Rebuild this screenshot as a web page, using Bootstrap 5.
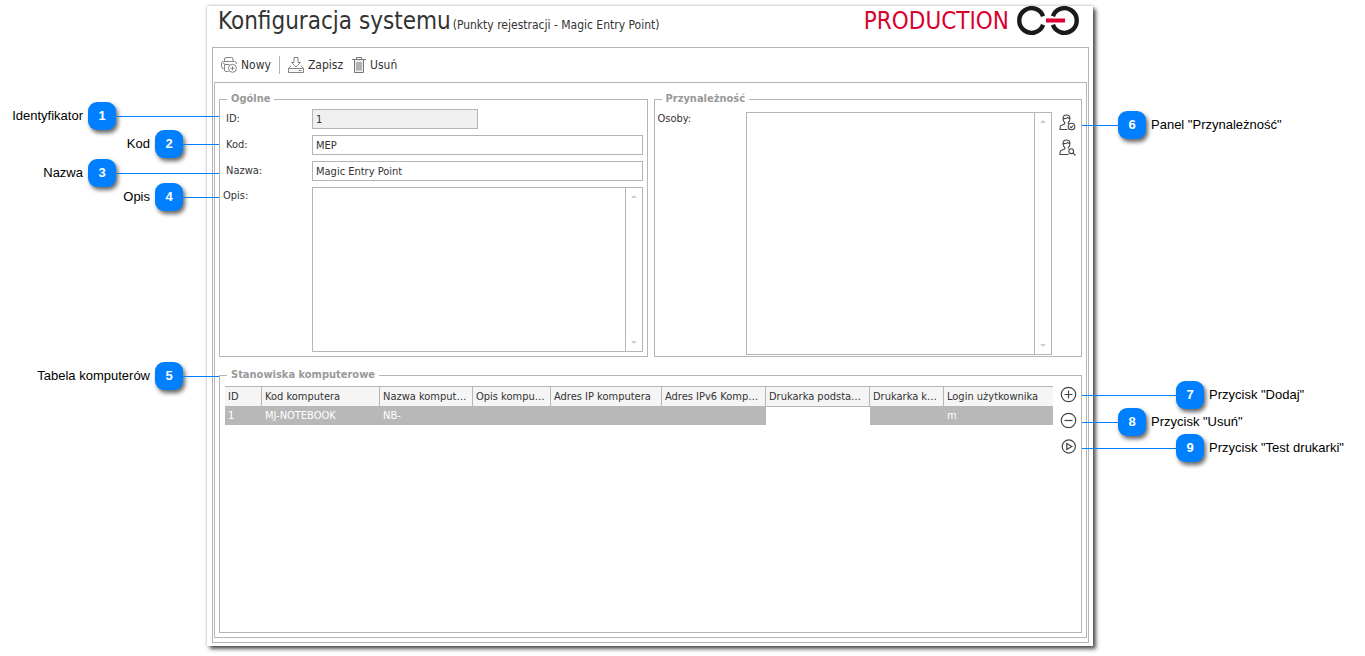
<!DOCTYPE html>
<html lang="pl">
<head>
<meta charset="utf-8">
<meta name="viewport" content="width=device-width, initial-scale=1">
<title>Konfiguracja systemu</title>
<link href="https://cdn.jsdelivr.net/npm/bootstrap@5.3.0/dist/css/bootstrap.min.css" rel="stylesheet">
<style>
:root { --line: #b5b5b5; --blue: #007fff; --ink: #333; }
body { font-family: "DejaVu Sans Condensed", "DejaVu Sans", sans-serif; font-size: 11px; line-height: 14px; color: var(--ink); background: #fff; }
.side-left { flex: 0 0 207px; }
.side-right { flex: 0 0 272px; }
.window { margin: 6px 0 10px; padding: 0 4px 3px 5px; background: #fff; min-width: 0;
  box-shadow: 3px 3px 4px rgba(0,0,0,.65), 0 0 3px rgba(0,0,0,.3); }
.title-bar { height: 41px; padding: 0 10px 0 6px; }
.title-bar h1 { font-size: 24px; line-height: 31px; color: var(--ink); gap: 2px; }
.title-bar small { font-size: 12px; }
.brand-name { font-size: 24px; line-height: 31px; color: #d9002f; }
.frame { border: 1px solid var(--line); }
.frame-outer { padding: 0 1px 4px; }
.frame-inner { padding: 9px 4px 4px; }
.toolbar { height: 34px; padding: 0 7px; }
.tool { padding: 0; border: 0; background: none; color: var(--ink); font-size: 12px; line-height: 16px; gap: 3px; }
.split { width: 1px; height: 18px; background: var(--line); margin: 0 8px; }
.panels { gap: 6px; margin-bottom: 11px; }
fieldset.group { border: 1px solid var(--line); }
fieldset.group legend { float: none; width: auto; margin: 0 0 0 7px; padding: 0 4px; font-size: 11px; line-height: 14px; font-weight: 700; color: #999; }
.fields { padding: 3px 4px 4px 0; gap: 6px; }
.fields label { flex: 0 0 92px; padding-left: 6px; line-height: 20px; }
.fields label.tall { padding-left: 3px; line-height: 18px; }
.people { padding: 6px 5px 1px 3px; }
.people label { flex: 0 0 88px; }
.field { height: 20px; min-height: 0; padding: 0 3px; border: 1px solid var(--line); border-radius: 0; font-size: 11px; line-height: 18px; color: var(--ink); }
.field-id { width: 166px; }
.field[readonly] { background: #f0f0f0; }
.memo { border: 1px solid var(--line); min-width: 0; }
.memo textarea { resize: none; border: 0; border-radius: 0; padding: 3px; font-size: 11px; outline: 0; min-width: 0; overflow: hidden; }
.memo-text { height: 165px; }
.gutter { flex: 0 0 17px; border-left: 1px solid var(--line); padding: 7px 0; }
.gutter span { border: 3px solid transparent; }
.gutter .up { border-top: 0; border-bottom-color: #ccc; }
.gutter .down { border-bottom: 0; border-top-color: #ccc; }
.icon-btn { padding: 0; border: 0; background: none; width: 17px; height: 17px; line-height: 0; }
.people-tools { flex: 0 0 17px; margin-left: 7px; padding-top: 2px; gap: 8px; }
.stations { padding: 4px 4px 0 5px; }
.station-tools { flex: 0 0 17px; margin-left: 7px; gap: 9px; }
.grid { table-layout: fixed; border-collapse: separate; border-spacing: 0; margin: 0; font-size: 11px; line-height: 14px; color: var(--ink); border-top: 1px solid var(--line); }
.grid th, .grid td { padding: 3px 3px 2px; white-space: nowrap; overflow: hidden; height: 19px; border: 0; }
.grid th { font-weight: 400; background: #f5f5f5; box-shadow: none; border-right: 1px solid var(--line); color: var(--ink); }
.grid th:last-child { border-right: 0; }
.grid td { background: #b8b8b8; color: #fff; box-shadow: none; }
.grid td.blank { background: #fff; box-shadow: inset 0 1px var(--line); }
.callout { position: absolute; z-index: 2; height: 28px; font-family: "Liberation Sans", Arial, sans-serif; font-size: 13px; line-height: 16px; color: #000; white-space: nowrap; }
.side-left .callout { left: 0; width: 219px; }
.side-right .callout { right: 0; left: -11px; }
.pin { flex: 0 0 28px; height: 28px; border-radius: 9px; background: var(--blue); color: #fff; font-weight: 700; line-height: 28px; text-align: center; box-shadow: 2px 3px 4px rgba(0,0,0,.6); }
.lead-line { height: 1px; background: var(--blue); }
.side-left .name { flex: 0 0 88px; padding-right: 5px; text-align: right; }
.side-left .near .name { flex-basis: 155px; }
.side-right .name { padding-left: 5px; }
.side-right .lead-line { flex: 0 0 94px; }
.side-right .near .lead-line { flex-basis: 36px; }
.c1 { top: 102px; } .c2 { top: 130px; } .c3 { top: 159px; } .c4 { top: 183px; } .c5 { top: 362px; }
.c6 { top: 111px; } .c7 { top: 381px; } .c8 { top: 408px; } .c9 { top: 434px; }
svg { display: block; }
</style>
</head>
<body>
<div class="d-flex min-vh-100">
  <aside class="side-left position-relative" aria-label="Opisy pól">
    <div class="callout c1 d-flex align-items-center"><span class="name">Identyfikator</span><span class="pin">1</span><span class="lead-line flex-grow-1"></span></div>
    <div class="callout c2 near d-flex align-items-center"><span class="name">Kod</span><span class="pin">2</span><span class="lead-line flex-grow-1"></span></div>
    <div class="callout c3 d-flex align-items-center"><span class="name">Nazwa</span><span class="pin">3</span><span class="lead-line flex-grow-1"></span></div>
    <div class="callout c4 near d-flex align-items-center"><span class="name">Opis</span><span class="pin">4</span><span class="lead-line flex-grow-1"></span></div>
    <div class="callout c5 near d-flex align-items-center"><span class="name">Tabela komputerów</span><span class="pin">5</span><span class="lead-line flex-grow-1"></span></div>
  </aside>

  <main class="window flex-grow-1 d-flex flex-column">
    <header class="title-bar d-flex justify-content-between align-items-start">
      <h1 class="m-0 fw-normal text-nowrap d-flex align-items-baseline"><span>Konfiguracja systemu</span> <small class="fw-normal">(Punkty rejestracji - Magic Entry Point)</small></h1>
      <div class="d-flex gap-2">
        <span class="brand-name">PRODUCTION</span>
        <svg width="62" height="29" viewBox="0 0 62 29" fill="none" stroke="#1a1a1a" stroke-width="4.4" aria-hidden="true">
          <path d="M26.100 10.300A12.300 12.300 0 1 0 26.100 18.700M35.900 10.300A12.300 12.300 0 1 1 35.900 18.700"/>
          <path d="M29 14.500H48" stroke="#dc0032" stroke-width="4"/>
        </svg>
      </div>
    </header>

    <div class="frame frame-outer flex-grow-1 d-flex flex-column">
      <div class="toolbar d-flex align-items-center">
        <button type="button" class="tool d-flex align-items-center">
          <svg width="17" height="16" viewBox="0 0 17 16" fill="none" stroke="#858585"><path d="M3.500 4V2Q3.500 .5 5 .5H10.500Q12 .5 12 2V4M3.500 11.500H2.500Q.5 11.500 .5 9.500V6.500Q.5 4.500 2.500 4.500H13.500Q15.500 4.500 15.500 7M3.500 7.500H8.500M3.500 7.500V13Q3.500 14.500 5 14.500H7.500M2 6.500H3.500"/><circle cx="11.500" cy="11.300" r="4"/><path d="M11.500 9.300V13.300M9.500 11.300H13.500"/></svg>
          Nowy</button>
        <span class="split"></span>
        <button type="button" class="tool d-flex align-items-center">
          <svg width="17" height="16" viewBox="0 0 17 16" fill="none" stroke="#858585"><path d="M6 .5H10V5.500H12.500L8 10 3.500 5.500H6ZM3 8.500L.5 11.500V15.500H15.500V11.500L13 8.500M.5 11.500H15.500M10.500 13.500H13.500"/></svg>
          Zapisz</button>
        <button type="button" class="tool d-flex align-items-center ms-2">
          <svg width="16" height="16" viewBox="0 0 16 16" fill="none" stroke="#777"><path d="M3.500 3V15.500H12.500V3" fill="#eee"/><path d="M1 2.500H15M5.500 2V.5H10.500V2M6 5V13.500M8 5V13.500M10 5V13.500"/></svg>
          Usuń</button>
      </div>

      <div class="frame frame-inner flex-grow-1 d-flex flex-column">
        <div class="panels d-flex">
          <fieldset class="group w-50">
            <legend>Ogólne</legend>
            <div class="fields d-flex flex-column">
              <div class="d-flex"><label for="fid">ID:</label><input id="fid" class="form-control field field-id" value="1" readonly></div>
              <div class="d-flex"><label for="fkod">Kod:</label><input id="fkod" class="form-control field" value="MEP"></div>
              <div class="d-flex"><label for="fnazwa">Nazwa:</label><input id="fnazwa" class="form-control field" value="Magic Entry Point"></div>
              <div class="d-flex align-items-start"><label for="fopis" class="tall">Opis:</label>
                <div class="memo memo-text d-flex flex-grow-1">
                  <textarea id="fopis" class="flex-grow-1"></textarea>
                  <div class="gutter d-flex flex-column justify-content-between align-items-center"><span class="up"></span><span class="down"></span></div>
                </div>
              </div>
            </div>
          </fieldset>
          <fieldset class="group w-50 d-flex flex-column">
            <legend>Przynależność</legend>
            <div class="people d-flex h-100">
              <label for="fosoby">Osoby:</label>
              <div class="memo d-flex flex-grow-1">
                <textarea id="fosoby" class="flex-grow-1"></textarea>
                <div class="gutter d-flex flex-column justify-content-between align-items-center"><span class="up"></span><span class="down"></span></div>
              </div>
              <div class="people-tools d-flex flex-column">
                <button type="button" class="icon-btn" aria-label="Wybierz osobę"><svg width="17" height="17" viewBox="0 0 17 17" fill="none" stroke="#444" stroke-width="1.100"><path d="M4 4.500Q4 1 7.500 1T11 4.500Q11 7 9.300 8.500V10M4 4.500Q4 7 5.700 8.500V10L2 11.500Q1 12 1 15.500H8.500M4 4.500Q7.500 5 8.500 3.500Q9.500 4.500 11 4.500"/><circle cx="12.500" cy="12.500" r="3.300"/><path d="M11 12.500L12.200 13.700 14.200 11.500"/></svg></button>
                <button type="button" class="icon-btn" aria-label="Szukaj osoby"><svg width="17" height="17" viewBox="0 0 17 17" fill="none" stroke="#444" stroke-width="1.100"><path d="M4 4.500Q4 1 7.500 1T11 4.500Q11 7 9.300 8.500V9.500M4 4.500Q4 7 5.700 8.500V10L2 11.500Q1 12 1 15.500H9.500M4 4.500Q7.500 5 8.500 3.500Q9.500 4.500 11 4.500"/><circle cx="12.200" cy="12.200" r="2.400"/><path d="M14 14L16.500 16.500"/></svg></button>
              </div>
            </div>
          </fieldset>
        </div>

        <fieldset class="group flex-grow-1">
          <legend>Stanowiska komputerowe</legend>
          <div class="stations d-flex align-items-start">
            <div class="flex-grow-1">
              <table class="table grid w-100">
                <colgroup><col style="width:37px"><col style="width:118px"><col style="width:93px"><col style="width:78px"><col style="width:111px"><col style="width:104px"><col style="width:104px"><col style="width:74px"><col style="width:109px"></colgroup>
                <thead><tr><th>ID</th><th>Kod komputera</th><th>Nazwa komput…</th><th>Opis kompu…</th><th>Adres IP komputera</th><th>Adres IPv6 Komp…</th><th>Drukarka podsta…</th><th>Drukarka k…</th><th>Login użytkownika</th></tr></thead>
                <tbody><tr><td>1</td><td>MJ-NOTEBOOK</td><td>NB-</td><td></td><td></td><td></td><td class="blank"></td><td></td><td>m</td></tr></tbody>
              </table>
            </div>
            <div class="station-tools d-flex flex-column">
              <button type="button" class="icon-btn" aria-label="Dodaj"><svg width="17" height="17" viewBox="0 0 17 17" fill="none" stroke="#444" stroke-width="1.200"><circle cx="8.500" cy="8.500" r="7.200"/><path d="M8.500 4.500V12.500M4.500 8.500H12.500"/></svg></button>
              <button type="button" class="icon-btn" aria-label="Usuń"><svg width="17" height="17" viewBox="0 0 17 17" fill="none" stroke="#444" stroke-width="1.200"><circle cx="8.500" cy="8.500" r="7.200"/><path d="M4.500 8.500H12.500"/></svg></button>
              <button type="button" class="icon-btn" aria-label="Test drukarki"><svg width="17" height="17" viewBox="0 0 17 17" fill="none" stroke="#444" stroke-width="1.200"><circle cx="8.800" cy="8.500" r="6.600"/><path d="M6.800 5.500V11.500L11.800 8.500Z"/></svg></button>
            </div>
          </div>
        </fieldset>
      </div>
    </div>
  </main>

  <aside class="side-right position-relative" aria-label="Opisy przycisków">
    <div class="callout c6 near d-flex align-items-center"><span class="lead-line"></span><span class="pin">6</span><span class="name">Panel "Przynależność"</span></div>
    <div class="callout c7 d-flex align-items-center"><span class="lead-line"></span><span class="pin">7</span><span class="name">Przycisk "Dodaj"</span></div>
    <div class="callout c8 near d-flex align-items-center"><span class="lead-line"></span><span class="pin">8</span><span class="name">Przycisk "Usuń"</span></div>
    <div class="callout c9 d-flex align-items-center"><span class="lead-line"></span><span class="pin">9</span><span class="name">Przycisk "Test drukarki"</span></div>
  </aside>
</div>
<script src="https://cdn.jsdelivr.net/npm/bootstrap@5.3.0/dist/js/bootstrap.bundle.min.js"></script>
</body>
</html>
